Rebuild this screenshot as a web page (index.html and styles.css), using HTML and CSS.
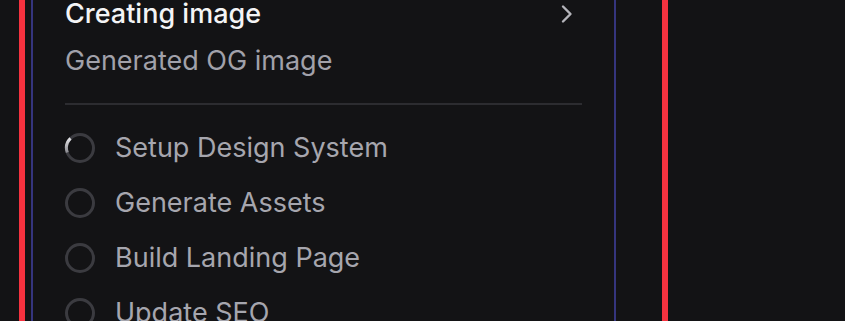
FILE: index.html
```html
<!DOCTYPE html>
<html lang="en">
<head>
  <meta charset="UTF-8">
  <title>Creating image</title>
  <link rel="stylesheet" href="styles.css">
</head>
<body>
  <div class="frame">
    <div class="card">
      <div class="head">
        <span class="title">Creating image</span>
        <svg class="chevron" width="14" height="20" viewBox="0 0 14 20">
          <path d="M3 2.5 L10.5 10 L3 17.5" fill="none" stroke="currentColor" stroke-width="2.4" stroke-linecap="round" stroke-linejoin="round"/>
        </svg>
      </div>
      <p class="subtitle">Generated OG image</p>
      <hr class="divider">
      <ul class="steps">
        <li class="step">
          <svg class="ring" width="32" height="32" viewBox="0 0 32 32">
            <defs>
              <linearGradient id="spin" x1="0" y1="0" x2="0" y2="1">
                <stop offset="0" stop-color="#e4e4e7"/>
                <stop offset="1" stop-color="#8a8a90"/>
              </linearGradient>
            </defs>
            <circle cx="16" cy="16" r="13.5" fill="none" stroke="#3b3b40" stroke-width="3"/>
            <path d="M3.3 20.6 A13.5 13.5 0 0 1 6.5 6.4" fill="none" stroke="url(#spin)" stroke-width="3"/>
          </svg>
          <span>Setup Design System</span>
        </li>
        <li class="step">
          <svg class="ring" width="32" height="32" viewBox="0 0 32 32">
            <circle cx="16" cy="16" r="13.5" fill="none" stroke="#3b3b40" stroke-width="3"/>
          </svg>
          <span>Generate Assets</span>
        </li>
        <li class="step">
          <svg class="ring" width="32" height="32" viewBox="0 0 32 32">
            <circle cx="16" cy="16" r="13.5" fill="none" stroke="#3b3b40" stroke-width="3"/>
          </svg>
          <span>Build Landing Page</span>
        </li>
        <li class="step">
          <svg class="ring" width="32" height="32" viewBox="0 0 32 32">
            <circle cx="16" cy="16" r="13.5" fill="none" stroke="#3b3b40" stroke-width="3"/>
          </svg>
          <span>Update SEO</span>
        </li>
      </ul>
    </div>
  </div>
</body>
</html>
```

FILE: styles.css
```css
body {
  margin: 0;
  background: #131315;
  font-family: Inter, 'Noto Sans', sans-serif;
  overflow: hidden;
}
.frame {
  box-sizing: border-box;
  width: 649px;
  margin: -4px 0 0 19px;
  padding-left: 6px;
  border-left: 6px solid #f5323f;
  border-right: 6px solid #f5323f;
  min-height: 360px;
}
.card {
  box-sizing: border-box;
  width: 585px;
  min-height: 360px;
  padding: 0 32px;
  border-left: 2px solid #35357e;
  border-right: 2px solid #35357e;
}
.head {
  display: flex;
  align-items: center;
  justify-content: space-between;
  height: 36px;
}
.title {
  font-size: 27px;
  line-height: 36px;
  font-weight: 500;
  color: #f4f4f5;
}
.chevron {
  color: #b4b4ba;
  margin-right: 8px;
}
.subtitle {
  margin: 11px 0 0 0;
  font-size: 27px;
  line-height: 36px;
  color: #a1a1aa;
}
.divider {
  margin: 24px 0 15px 0;
  border: none;
  height: 2px;
  background: #2c2c30;
}
.steps {
  list-style: none;
  margin: 0;
  padding: 0;
}
.step {
  display: flex;
  align-items: center;
  gap: 19px;
  height: 55px;
  font-size: 27px;
  color: #a6a6ae;
}
.ring {
  flex: none;
  margin-left: -1px;
}
```
